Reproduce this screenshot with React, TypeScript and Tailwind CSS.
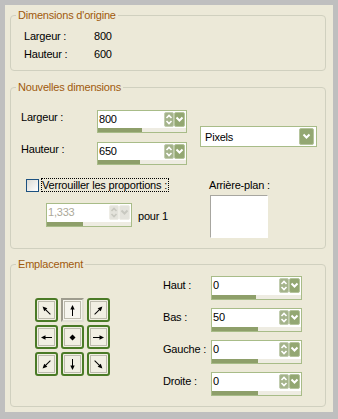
import React from "react";

const legend = "ml-[5px] px-[2px] leading-[14px] text-[#A05A0C]";
const group = "w-[316px] border border-[#D0D0BF] rounded-[4px]";

function UpDown({ disabled }: { disabled?: boolean }) {
  return (
    <div className={`w-[10px] h-[15px] rounded-[2px] border ${disabled ? "bg-[#E4E3DC] border-[#EEEDE6]" : "bg-[#A4B38B] border-[#C2CDB0]"}`}>
      <svg width="8" height="13" viewBox="0 0 8 13">
        <polyline points="1.5,5 4,2.5 6.5,5" fill="none" stroke={disabled ? "#C8C8C0" : "#fff"} strokeWidth="1.6" />
        <polyline points="1.5,8 4,10.5 6.5,8" fill="none" stroke={disabled ? "#C8C8C0" : "#fff"} strokeWidth="1.6" />
      </svg>
    </div>
  );
}

function DropBtn({ disabled, big }: { disabled?: boolean; big?: boolean }) {
  return (
    <div
      className={`flex items-center justify-center rounded-[2px] border ${big ? "w-[15px] h-[17px]" : "w-[11px] h-[15px]"} ${
        disabled ? "bg-[#E4E3DC] border-[#EEEDE6]" : "bg-[#93A772] border-[#B5C49C]"
      }`}
    >
      <svg width="9" height="7" viewBox="0 0 9 7">
        <polyline points="1.5,1.5 4.5,4.5 7.5,1.5" fill="none" stroke={disabled ? "#C8C8C0" : "#fff"} strokeWidth="2" />
      </svg>
    </div>
  );
}

function Spin({ value, size, bar, disabled }: { value: string; size: string; bar: string; disabled?: boolean }) {
  return (
    <div className={`flex flex-col border border-[#A8BC88] bg-white ${size}`}>
      <div className="flex flex-1">
        <span className={`flex-1 pl-[1px] pt-[1px] leading-[14px] ${disabled ? "text-[#ACA899]" : "text-black"}`}>{value}</span>
        <div className="flex pt-[1px] pr-[1px]">
          <UpDown disabled={disabled} />
          <DropBtn disabled={disabled} />
        </div>
      </div>
      <div className="flex h-[4px]">
        <div className={`${bar} bg-[#8E9F6A]`} />
        <div className="flex-1 bg-[#EEECE2]" />
      </div>
    </div>
  );
}

function Arrow({ angle, selected }: { angle?: number; selected?: boolean }) {
  return (
    <div
      className={`w-[23px] h-[24px] flex items-center justify-center rounded-[3px] border-2 ${
        selected ? "border-t-[#9E9C8E] border-l-[#9E9C8E] border-b-[#E2E0D4] border-r-[#E2E0D4] bg-[#F6F5EE] rounded-none" : "border-[#4A7A26] bg-[#F1EFE3]"
      }`}
    >
      <div className="w-[17px] h-[18px] flex items-center justify-center border border-[#BDBBAE]">
        <svg width="13" height="13" viewBox="0 0 13 13">
          {angle === undefined ? (
            <polygon points="6.5,3.5 9.5,6.5 6.5,9.5 3.5,6.5" fill="#000" />
          ) : (
            <g transform={`rotate(${angle} 6.5 6.5)`}>
              <line x1="6.5" y1="12" x2="6.5" y2="3" stroke="#000" strokeWidth="1" />
              <polygon points="6.5,1 4.3,5.5 8.7,5.5" fill="#000" />
            </g>
          )}
        </svg>
      </div>
    </div>
  );
}

export default function App() {
  return (
    <div className="w-[338px] h-[419px] overflow-hidden bg-[#BFBFBF] pt-[5px] pl-[5px] font-['Liberation_Sans',Arial,sans-serif] text-[11px] tracking-[-0.2px] text-black">
      <div className="w-[328px] h-[407px] bg-[#ECE9D8] pl-[5px] pt-[3px]">
        {/* Dimensions d'origine */}
        <fieldset className={group}>
          <legend className={legend}>Dimensions d'origine</legend>
          <div className="flex flex-col gap-[4px] pt-[7px] pb-[9px] pl-[13px] leading-[14px]">
            <div className="flex">
              <span className="w-[70px]">Largeur :</span>
              <span>800</span>
            </div>
            <div className="flex">
              <span className="w-[70px]">Hauteur :</span>
              <span>600</span>
            </div>
          </div>
        </fieldset>

        {/* Nouvelles dimensions */}
        <fieldset className={`${group} mt-[9px]`}>
          <legend className={legend}>Nouvelles dimensions</legend>
          <div className="pt-[16px] pb-[10px]">
            <div className="flex items-start pl-[10px]">
              <div className="flex flex-col gap-[9px]">
                <div className="flex">
                  <span className="w-[76px] leading-[14px]">Largeur :</span>
                  <Spin value="800" size="w-[90px] h-[23px]" bar="w-[44px]" />
                </div>
                <div className="flex">
                  <span className="w-[76px] leading-[14px]">Hauteur :</span>
                  <Spin value="650" size="w-[90px] h-[23px]" bar="w-[42px]" />
                </div>
              </div>
              <div className="ml-[13px] mt-[16px] w-[117px] h-[21px] flex items-center justify-between border border-[#A8BC88] bg-white pl-[4px] pr-[2px]">
                <span className="leading-[14px]">Pixels</span>
                <DropBtn big />
              </div>
            </div>

            <div className="flex mt-[13px] pl-[15px]">
              <div className="w-[183px] flex flex-col">
                <div className="flex items-center h-[14px]">
                  <span className="w-[13px] h-[13px] border border-[#1C5180] bg-gradient-to-br from-[#DCDBD4] to-white" />
                  <span className="ml-[2px] border border-dotted border-black leading-[12px] pr-[1px]">Verrouiller les proportions :</span>
                </div>
                <div className="flex items-start mt-[11px] ml-[20px]">
                  <Spin value="1,333" size="w-[86px] h-[24px]" bar="w-[36px]" disabled />
                  <span className="ml-[6px] mt-[6px] leading-[14px]">pour 1</span>
                </div>
              </div>
              <div className="flex flex-col">
                <span className="leading-[14px]">Arrière-plan :</span>
                <div className="ml-[1px] mt-[3px] w-[58px] h-[43px] bg-white border border-t-[#A7A6A0] border-l-[#A7A6A0] border-b-white border-r-white" />
              </div>
            </div>
          </div>
        </fieldset>

        {/* Emplacement */}
        <fieldset className={`${group} mt-[8px]`}>
          <legend className={legend}>Emplacement</legend>
          <div className="flex pt-[5px] pb-[10px] pl-[24px]">
            <div className="mt-[22px] grid grid-cols-3 gap-[3px] self-start">
              <Arrow angle={-45} />
              <Arrow angle={0} selected />
              <Arrow angle={45} />
              <Arrow angle={-90} />
              <Arrow />
              <Arrow angle={90} />
              <Arrow angle={-135} />
              <Arrow angle={180} />
              <Arrow angle={135} />
            </div>
            <div className="ml-[53px] flex flex-col gap-[8px]">
              {[
                ["Haut :", "0", "w-[44px]"],
                ["Bas :", "50", "w-[46px]"],
                ["Gauche :", "0", "w-[46px]"],
                ["Droite :", "0", "w-[46px]"],
              ].map(([label, value, bar]) => (
                <div key={label} className="flex">
                  <span className="w-[48px] mt-[2px] leading-[14px]">{label}</span>
                  <Spin value={value} size="w-[91px] h-[24px]" bar={bar} />
                </div>
              ))}
            </div>
          </div>
        </fieldset>
      </div>
    </div>
  );
}
